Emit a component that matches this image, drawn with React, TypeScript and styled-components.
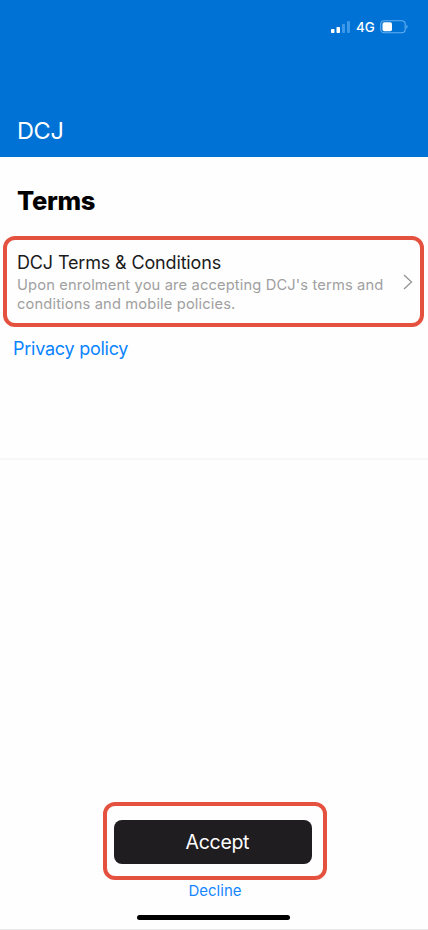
import React from "react";
import styled, { createGlobalStyle } from "styled-components";

const GlobalStyle = createGlobalStyle`
  * { box-sizing: border-box; }
  body { margin: 0; background: #fefefe; font-family: Inter, "Liberation Sans", sans-serif; }
  button { font-family: inherit; border: 0; padding: 0; margin: 0; cursor: pointer; }
`;

const Screen = styled.div`
  width: 428px;
  height: 930px;
  display: flex;
  flex-direction: column;
  background: #fefefe;
  border-bottom: 1px solid #e9e9e9;
  overflow: hidden;
`;

const Header = styled.header`
  height: 157px;
  flex: none;
  display: flex;
  flex-direction: column;
  justify-content: space-between;
  background: #0072d6;
  color: #fff;
`;

const StatusBar = styled.div`
  height: 14px;
  margin: 20px 20px 0 0;
  display: flex;
  justify-content: flex-end;
  align-items: center;
`;

const Network = styled.span`
  width: 20px;
  margin: 0 4px 1px 5px;
  font-size: 13.4px;
  line-height: 14px;
  font-weight: 500;
`;

const AppName = styled.div`
  padding-left: 17px;
  margin-bottom: 11px;
  font-size: 23.5px;
  line-height: 30px;
  letter-spacing: -0.35px;
`;

const Heading = styled.h1`
  margin: 28px 0 20px 17px;
  font-size: 25.5px;
  line-height: 31px;
  font-weight: 800;
  letter-spacing: -0.3px;
  color: #000;
`;

const Highlight = styled.div`
  border: 4px solid #e5513f;
  border-radius: 12px;
  background: #fefefe;
`;

const TermsCard = styled(Highlight)`
  width: 421px;
  height: 91px;
  margin-left: 3px;
  padding: 11px 6px 0 10px;
  display: flex;
  justify-content: space-between;
`;

const CardTitle = styled.div`
  margin-bottom: 1px;
  font-size: 18px;
  line-height: 24px;
  letter-spacing: -0.15px;
  color: #1b1b1b;
`;

const CardText = styled.div`
  font-size: 14.7px;
  line-height: 18.5px;
  letter-spacing: 0.14px;
  color: #a0a0a0;
  white-space: nowrap;
`;

const Chevron = styled.svg`
  flex: none;
  margin-top: 22px;
`;

const PrivacyLink = styled.button`
  align-self: flex-start;
  margin: 10px 0 0 13px;
  background: none;
  font-size: 18px;
  line-height: 24px;
  letter-spacing: -0.25px;
  color: #0a84ff;
`;

const Divider = styled.div`
  height: 2px;
  margin-top: 97px;
  background: #f7f7f7;
`;

const Footer = styled.footer`
  margin-top: auto;
  display: flex;
  flex-direction: column;
  align-items: center;
`;

const AcceptFrame = styled(Highlight)`
  width: 224px;
  height: 78px;
  margin-left: 2px;
  padding: 14px 0 0 7.4px;
`;

const AcceptButton = styled.button`
  display: block;
  width: 198px;
  height: 44px;
  padding-left: 8px;
  border-radius: 8px;
  background: #201d21;
  color: #fff;
  font-size: 19.5px;
  letter-spacing: -0.3px;
`;

const DeclineButton = styled.button`
  margin-top: 1px;
  margin-left: 2px;
  background: none;
  color: #1686ff;
  font-size: 15px;
  line-height: 20px;
`;

const HomeIndicator = styled.div`
  width: 153px;
  height: 5px;
  margin: 14px 1px 9px 0;
  border-radius: 3px;
  background: #000;
`;

const Signal = () => (
  <svg width="20" height="14" viewBox="0 0 20 14">
    <rect x="0" y="9" width="3.5" height="4" rx="0.8" fill="#fff" />
    <rect x="5.5" y="7" width="3.5" height="6" rx="0.8" fill="#fff" />
    <rect x="11" y="4" width="3" height="9" rx="0.8" fill="#3c98e8" />
    <rect x="16" y="1" width="3" height="12" rx="0.8" fill="#3c98e8" />
  </svg>
);

const Battery = () => (
  <svg width="28" height="14" viewBox="0 0 28 14">
    <rect x="0.7" y="0.7" width="24.5" height="12" rx="3.5" fill="none" stroke="#62aff0" strokeWidth="1.1" />
    <rect x="2.5" y="2.3" width="9.5" height="9" rx="1.8" fill="#fff" />
    <path d="M26.4 4.7c1.6.6 1.6 3.4 0 4z" fill="#62aff0" />
  </svg>
);

export default function App() {
  return (
    <>
      <GlobalStyle />
      <Screen>
        <Header>
          <StatusBar>
            <Signal />
            <Network>4G</Network>
            <Battery />
          </StatusBar>
          <AppName>DCJ</AppName>
        </Header>
        <Heading>Terms</Heading>
        <TermsCard>
          <div>
            <CardTitle>DCJ Terms &amp; Conditions</CardTitle>
            <CardText>
              Upon enrolment you are accepting DCJ's terms and
              <br />
              conditions and mobile policies.
            </CardText>
          </div>
          <Chevron width="12" height="18" viewBox="0 0 12 18">
            <path d="M2 2l7.5 7L2 16" fill="none" stroke="#949494" strokeWidth="1.3" />
          </Chevron>
        </TermsCard>
        <PrivacyLink>Privacy policy</PrivacyLink>
        <Divider />
        <Footer>
          <AcceptFrame>
            <AcceptButton>Accept</AcceptButton>
          </AcceptFrame>
          <DeclineButton>Decline</DeclineButton>
          <HomeIndicator />
        </Footer>
      </Screen>
    </>
  );
}
